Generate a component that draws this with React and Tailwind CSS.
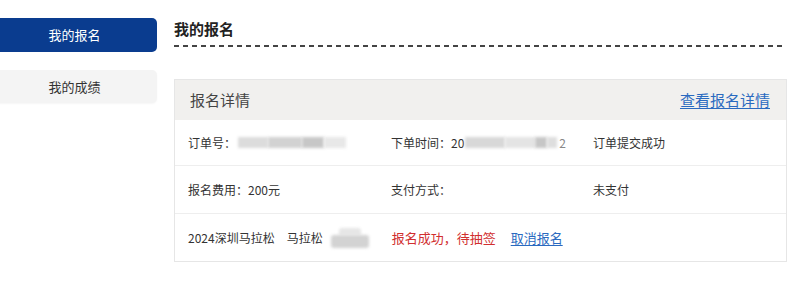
import React from 'react'

const font = { fontFamily: '"Microsoft YaHei", "Noto Sans CJK SC", "Liberation Sans", sans-serif' }

const Blur = ({ className }) => (
    <span className={`inline-block blur-[1.5px] ${className}`} />
)

const App = () => {
    return (
        <div className="w-[800px] h-[306px] bg-white flex text-[#333] overflow-hidden" style={font}>
            {/* Sidebar */}
            <div className="w-[157px] pt-[18px] flex flex-col gap-[18px]">
                <button className="ml-[-8px] h-[34px] w-[165px] bg-[#0a3c8f] text-white text-[13px] rounded-[5px]">
                    我的报名
                </button>
                <button className="ml-[-8px] h-[33px] w-[165px] bg-[#f4f4f4] text-[#333] text-[13px] rounded-[5px] shadow-[0_1px_2px_rgba(0,0,0,0.04)]">
                    我的成绩
                </button>
            </div>

            {/* Main */}
            <div className="ml-[17px] w-[613px]">
                <h2 className="mt-[19px] text-[15px] font-bold text-[#222] leading-[20px]">我的报名</h2>
                <div className="mt-[6px] h-[2px] w-[611px] bg-[repeating-linear-gradient(to_right,#444_0_5px,transparent_5px_9px)]" />

                {/* Card */}
                <div className="mt-[32px] border border-[#e6e6e6]">
                    <div className="h-[40px] bg-[#f1f0ee] flex items-center justify-between pl-[15px] pr-[16px]">
                        <span className="text-[15px] text-[#444]">报名详情</span>
                        <a className="text-[15px] text-[#2a6ac0] underline underline-offset-2">查看报名详情</a>
                    </div>

                    <div className="h-[46px] flex items-center text-[12px] border-b border-[#eeeeee]">
                        <div className="w-[216px] pl-[13px] flex items-center">
                            订单号：
                            <span className="ml-[2px] flex">
                                <Blur className="w-[30px] h-[11px] bg-[#dcdcdc]" />
                                <Blur className="w-[34px] h-[11px] bg-[#d2d2d2]" />
                                <Blur className="w-[22px] h-[11px] bg-[#c7c7c7]" />
                                <Blur className="w-[22px] h-[11px] bg-[#e8e8e8]" />
                            </span>
                        </div>
                        <div className="w-[202px] flex items-center">
                            下单时间：20
                            <span className="flex ml-[1px]">
                                <Blur className="w-[40px] h-[11px] bg-[#d8d8d8]" />
                                <Blur className="w-[30px] h-[11px] bg-[#e4e4e4]" />
                                <Blur className="w-[12px] h-[11px] bg-[#c6c6c6]" />
                                <Blur className="w-[10px] h-[11px] bg-[#dedede]" />
                            </span>
                            <span className="ml-[2px] text-[#888]">2</span>
                        </div>
                        <div>订单提交成功</div>
                    </div>

                    <div className="h-[48px] flex items-center text-[12px] border-b border-[#eeeeee]">
                        <div className="w-[216px] pl-[13px]">报名费用：200元</div>
                        <div className="w-[202px]">支付方式：</div>
                        <div>未支付</div>
                    </div>

                    <div className="h-[47px] flex items-center text-[12px]">
                        <div className="pl-[13px] flex items-center">
                            2024深圳马拉松
                            <span className="ml-[12px]">马拉松</span>
                            <span className="ml-[8px] flex flex-col items-center">
                                <Blur className="w-[22px] h-[7px] bg-[#e6e6e6] rounded-t-[3px]" />
                                <Blur className="w-[38px] h-[13px] bg-[#d3d3d3] rounded-[3px]" />
                            </span>
                        </div>
                        <span className="ml-[23px] text-[13px] text-[#d12f2f]">报名成功，待抽签</span>
                        <a className="ml-[15px] text-[13px] text-[#2a6ac0] underline underline-offset-2">取消报名</a>
                    </div>
                </div>
            </div>
        </div>
    )
}

export default App
